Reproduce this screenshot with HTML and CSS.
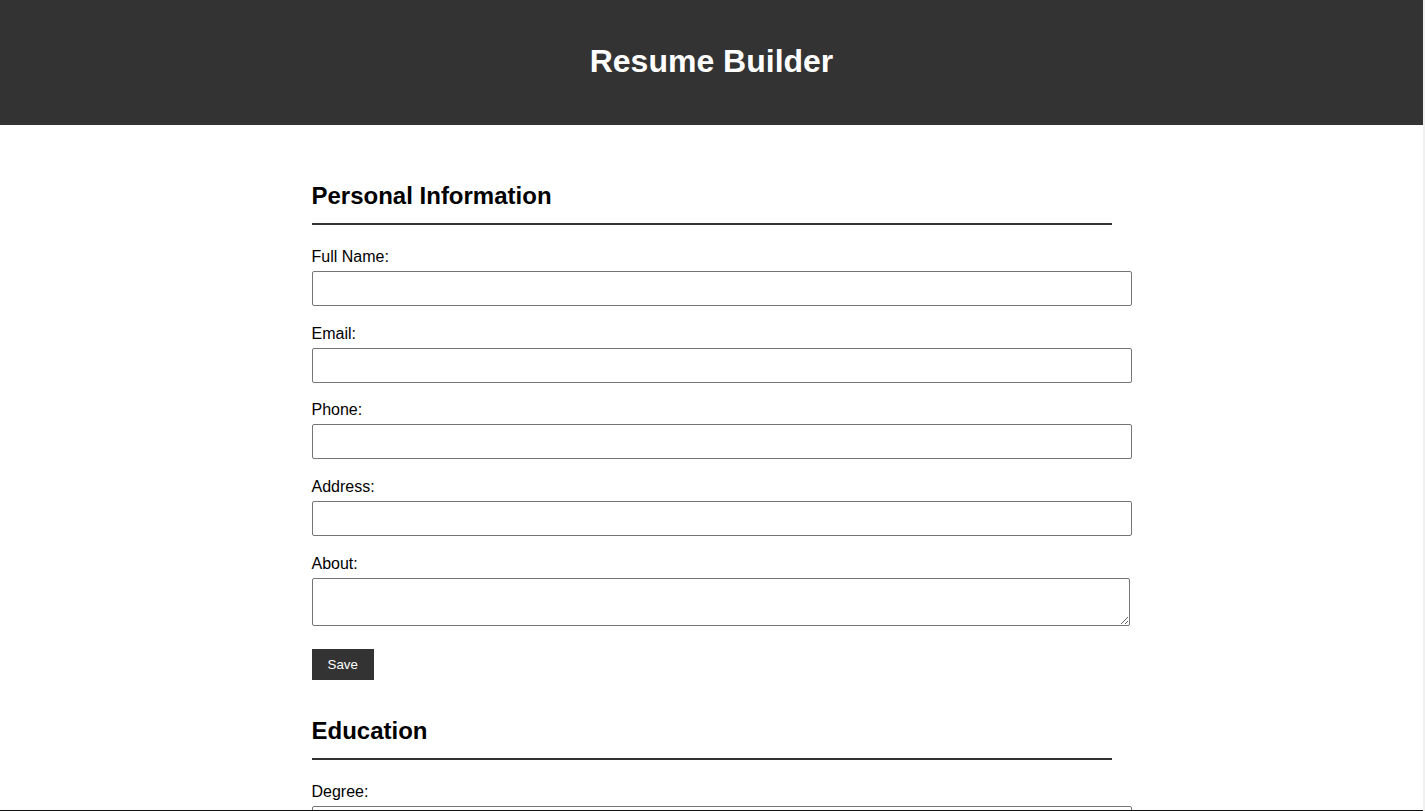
FILE: index.html
```html
<!DOCTYPE html>
<html lang="en">
<head>
<meta charset="utf-8">
<title>Resume Builder</title>
<link rel="stylesheet" href="styles.css">
</head>
<body>
<div class="page">
  <header class="site-header">
    <h1 class="site-title">Resume Builder</h1>
  </header>
  <main class="container">
    <section class="section">
      <h2 class="section-title">Personal Information</h2>
      <div class="field">
        <label class="field-label" for="fullname">Full Name:</label>
        <input class="field-input" id="fullname" type="text">
      </div>
      <div class="field">
        <label class="field-label" for="email">Email:</label>
        <input class="field-input" id="email" type="email">
      </div>
      <div class="field">
        <label class="field-label" for="phone">Phone:</label>
        <input class="field-input" id="phone" type="text">
      </div>
      <div class="field">
        <label class="field-label" for="address">Address:</label>
        <input class="field-input" id="address" type="text">
      </div>
      <div class="field">
        <label class="field-label" for="about">About:</label>
        <textarea class="field-textarea" id="about"></textarea>
      </div>
      <button class="btn" type="button">Save</button>
    </section>
    <section class="section">
      <h2 class="section-title">Education</h2>
      <div class="field">
        <label class="field-label" for="degree">Degree:</label>
        <input class="field-input" id="degree" type="text">
      </div>
      <div class="field">
        <label class="field-label" for="institution">Institution:</label>
        <input class="field-input" id="institution" type="text">
      </div>
      <div class="field">
        <label class="field-label" for="year">Year:</label>
        <input class="field-input" id="year" type="text">
      </div>
      <button class="btn" type="button">Save</button>
    </section>
  </main>
</div>
<div class="frame-edge"></div>
</body>
</html>
```
FILE: styles.css
```css
html {
  background: #f0f0f0;
}
body {
  margin: 0 2px 0 0;
  background: #ffffff;
  font-family: "Liberation Sans", Arial, sans-serif;
  color: #000;
}
.site-header {
  background: #333333;
  height: 125px;
  display: flex;
  align-items: center;
  justify-content: center;
}
.site-title {
  margin: 0;
  color: #ffffff;
  font-size: 32px;
  font-weight: bold;
  line-height: 37px;
  position: relative;
  top: -1px;
}
.container {
  width: 800px;
  margin: 0 auto;
  padding-top: 57px;
  padding-bottom: 40px;
}
.section {
  margin-bottom: 37px;
}
.section-title {
  margin: 0 0 23px 0;
  font-size: 24px;
  line-height: 28px;
  font-weight: bold;
  padding-bottom: 13px;
  border-bottom: 2px solid #333333;
}
.field {
  margin-bottom: 18.67px;
}
.field-label {
  display: block;
  font-size: 16px;
  line-height: 18px;
  margin-bottom: 5px;
}
.field-input {
  display: block;
  box-sizing: border-box;
  width: calc(100% + 20px);
  height: 35px;
  margin: 0;
  padding: 8px;
  border: 1px solid #767676;
  border-radius: 2px;
  font-family: inherit;
  font-size: 14px;
  background: #fff;
}
.field-textarea {
  display: block;
  box-sizing: border-box;
  width: calc(100% + 18px);
  height: 48px;
  margin: 0;
  padding: 8px;
  border: 1px solid #767676;
  border-radius: 2px;
  font-family: inherit;
  font-size: 14px;
  background: #fff;
}
.btn {
  display: block;
  margin-top: 23.5px;
  background: #333333;
  color: #ffffff;
  border: none;
  border-radius: 0;
  padding: 8px 16px;
  font-family: "Liberation Sans", Arial, sans-serif;
  font-size: 13.33px;
  line-height: 15px;
}
.frame-edge {
  position: fixed;
  left: 0;
  right: 2px;
  bottom: 0;
  height: 1px;
  background: #111111;
}
```
